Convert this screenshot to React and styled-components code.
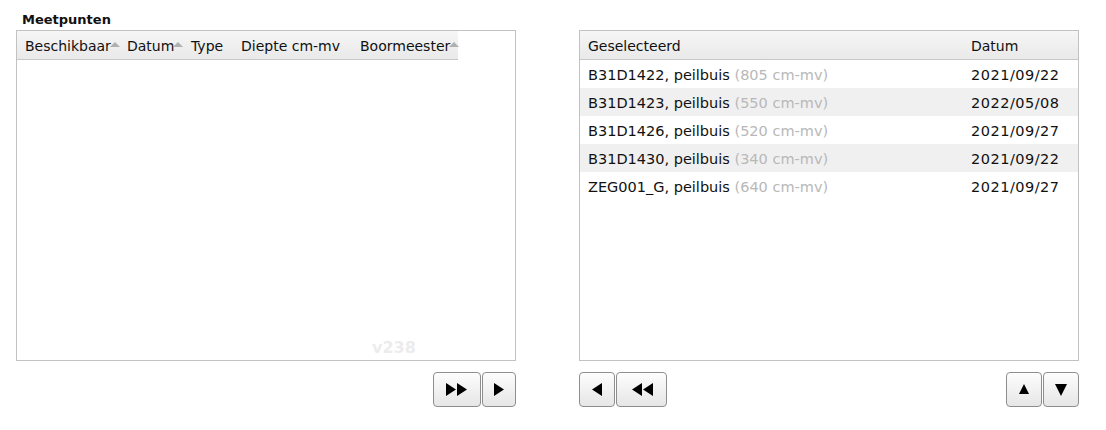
import React from "react";
import styled, { createGlobalStyle } from "styled-components";

const GlobalStyle = createGlobalStyle`
  body {
    margin: 0;
    background: #fff;
    font-family: "DejaVu Sans", "Liberation Sans", sans-serif;
    color: #111;
  }
`;

const Page = styled.div`
  display: grid;
  grid-template-columns: 500px 500px;
  column-gap: 63px;
  padding: 12px 0 0 16px;
`;

const Column = styled.div`
  display: flex;
  flex-direction: column;
`;

const Title = styled.div`
  font-weight: bold;
  font-size: 13px;
  padding-left: 6px;
  height: 18px;
  line-height: 16px;
`;

const Panel = styled.div`
  position: relative;
  height: 331px;
  border: 1px solid #c2c2c2;
  box-sizing: border-box;
  overflow: hidden;
`;

const Header = styled.div`
  display: flex;
  height: 29px;
  width: ${(p) => (p.full ? "100%" : "441px")};
  align-items: center;
  padding-top: 1px;
  background: linear-gradient(#f6f6f6, #e9e9e9);
  border-bottom: 1px solid #c8c8c8;
  font-size: 14px;
  box-sizing: border-box;
`;

const HeadCell = styled.div`
  display: flex;
  align-items: center;
  padding-left: ${(p) => p.pl || 0}px;
  width: ${(p) => (p.w ? `${p.w}px` : "auto")};
  flex: ${(p) => (p.grow ? 1 : "none")};
  white-space: nowrap;
  box-sizing: border-box;
`;

const SortMark = styled.span`
  width: 0;
  height: 0;
  border-left: 5px solid transparent;
  border-right: 5px solid transparent;
  border-bottom: 5px solid #b0b0b0;
  margin-top: -3px;
  margin-left: -1px;
`;

const Row = styled.div`
  display: flex;
  align-items: center;
  height: 28px;
  padding-top: 1px;
  box-sizing: border-box;
  font-size: 14.5px;
  background: ${(p) => (p.alt ? "#f0f0f0" : "#fff")};
`;

const Name = styled.div`
  flex: 1;
  padding-left: 8px;
  white-space: nowrap;
`;

const Depth = styled.span`
  color: #b8b8b8;
`;

const DateCell = styled.div`
  width: 107px;
  white-space: nowrap;
  letter-spacing: ${(p) => (p.digits ? "0.5px" : "0")};
`;

const Watermark = styled.div`
  position: absolute;
  left: 355px;
  bottom: 3px;
  font-weight: bold;
  font-size: 16px;
  color: #ececec;
`;

const ButtonBar = styled.div`
  display: flex;
  justify-content: ${(p) => p.justify};
  margin-top: 11px;
`;

const Group = styled.div`
  display: flex;
  gap: 1px;
`;

const ArrowButton = styled.button`
  width: ${(p) => p.w}px;
  height: 35px;
  padding: 0;
  display: flex;
  align-items: center;
  justify-content: center;
  border: 1px solid #8e8e8e;
  border-radius: 4px;
  background: linear-gradient(#fdfdfd, #e6e6e6);
  box-shadow: inset 0 1px 0 #fff;
`;

const Tri = ({ dir }) => {
  const paths = {
    right: "M1 0 L11 6.5 L1 13 Z",
    left: "M11 0 L1 6.5 L11 13 Z",
    up: "M1 11 L6 1 L11 11 Z",
    down: "M0 1 L12 1 L6 13 Z",
  };
  return (
    <svg width="12" height="13" viewBox="0 0 12 13">
      <path d={paths[dir]} fill="#000" />
    </svg>
  );
};

const Double = ({ dir }) => (
  <svg width="22" height="13" viewBox="0 0 22 13">
    {dir === "right" ? (
      <>
        <path d="M0 0 L10 6.5 L0 13 Z" fill="#000" />
        <path d="M11 0 L21 6.5 L11 13 Z" fill="#000" />
      </>
    ) : (
      <>
        <path d="M11 0 L1 6.5 L11 13 Z" fill="#000" />
        <path d="M22 0 L12 6.5 L22 13 Z" fill="#000" />
      </>
    )}
  </svg>
);

const selected = [
  { name: "B31D1422", depth: 805, date: "2021/09/22" },
  { name: "B31D1423", depth: 550, date: "2022/05/08" },
  { name: "B31D1426", depth: 520, date: "2021/09/27" },
  { name: "B31D1430", depth: 340, date: "2021/09/22" },
  { name: "ZEG001_G", depth: 640, date: "2021/09/27" },
];

export default function App() {
  return (
    <>
      <GlobalStyle />
      <Page>
        <Column>
          <Title>Meetpunten</Title>
          <Panel>
            <Header>
              <HeadCell pl={8} w={110}>
                Beschikbaar
                <SortMark />
              </HeadCell>
              <HeadCell pl={0} w={64}>
                Datum
                <SortMark />
              </HeadCell>
              <HeadCell pl={0} w={50}>
                Type
              </HeadCell>
              <HeadCell pl={0} w={119}>
                Diepte cm-mv
              </HeadCell>
              <HeadCell pl={0}>
                Boormeester
                <SortMark />
              </HeadCell>
            </Header>
            <Watermark>v238</Watermark>
          </Panel>
          <ButtonBar justify="flex-end">
            <Group>
              <ArrowButton w={48}>
                <Double dir="right" />
              </ArrowButton>
              <ArrowButton w={34}>
                <Tri dir="right" />
              </ArrowButton>
            </Group>
          </ButtonBar>
        </Column>
        <Column>
          <Title />
          <Panel>
            <Header full>
              <HeadCell pl={8} grow>
                Geselecteerd
              </HeadCell>
              <DateCell>Datum</DateCell>
            </Header>
            {selected.map((s, i) => (
              <Row key={s.name} alt={i % 2 === 1}>
                <Name>
                  {s.name}, peilbuis <Depth>({s.depth} cm-mv)</Depth>
                </Name>
                <DateCell digits>{s.date}</DateCell>
              </Row>
            ))}
          </Panel>
          <ButtonBar justify="space-between">
            <Group>
              <ArrowButton w={36}>
                <Tri dir="left" />
              </ArrowButton>
              <ArrowButton w={51}>
                <Double dir="left" />
              </ArrowButton>
            </Group>
            <Group>
              <ArrowButton w={36}>
                <Tri dir="up" />
              </ArrowButton>
              <ArrowButton w={36}>
                <Tri dir="down" />
              </ArrowButton>
            </Group>
          </ButtonBar>
        </Column>
      </Page>
    </>
  );
}
